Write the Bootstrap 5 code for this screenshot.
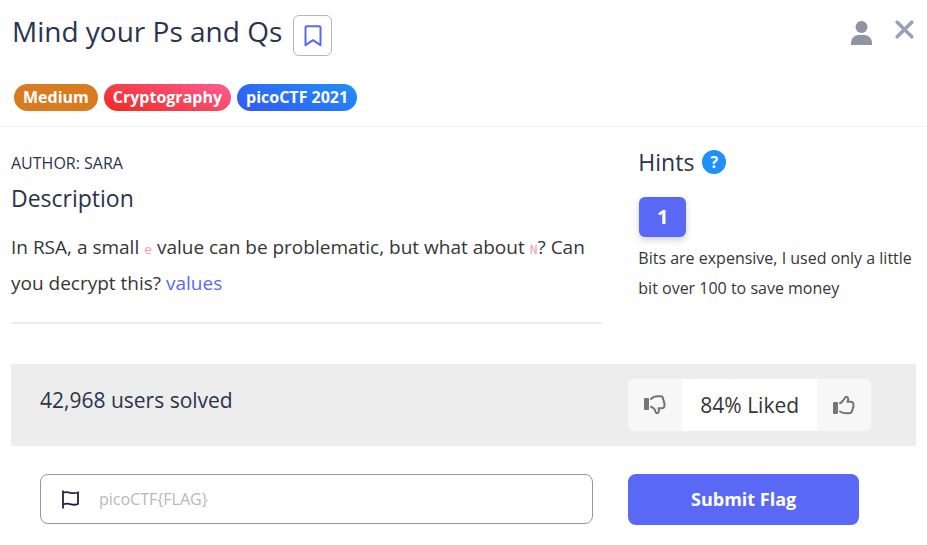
<!DOCTYPE html>
<html lang="en">
<head>
<meta charset="utf-8">
<meta name="viewport" content="width=device-width, initial-scale=1">
<title>Mind your Ps and Qs</title>
<link href="https://cdn.jsdelivr.net/npm/bootstrap@5.3.0/dist/css/bootstrap.min.css" rel="stylesheet">
<style>
  :root { --ink: #2b334c; --accent: #5a69f5; }
  body { font-family: "Open Sans", "Noto Sans", sans-serif; color: #363636; background: #fff; }
  h1, h2, .solved, .author { color: var(--ink); font-weight: 400; margin: 0; }
  svg { display: block; }
  .challenge-head { padding: 12px 12px 15px; border-bottom: 1px solid #f1f1f1; }
  h1 { font-size: 28px; line-height: 38px; }
  h2 { font-size: 23px; line-height: 30px; }
  .save-btn { width: 39px; height: 41px; margin: 3px 0 0 11px; border: 1px solid #b3b8c0; border-radius: 6px; background: #fff; }
  .head-actions { gap: 23px; padding: 8px 1px 0 0; }
  .head-actions button { border: 0; background: none; padding: 0; }
  .tags { gap: 6px; padding: 28px 0 0 2px; }
  .tag { height: 27px; line-height: 26px; padding: 0 9px; border-radius: 14px; color: #fff; font-size: 16px; font-weight: 700; text-decoration: none; }
  .tag-level { background: #d97b20; }
  .tag-topic { background: linear-gradient(20deg, #f02a1e, #ff5c93); }
  .tag-event { background: linear-gradient(20deg, #3457f5, #1e90fb); }
  .challenge-body { padding: 20px 11px 0; }
  .about { padding-right: 12px; }
  .author { font-size: 16px; line-height: 32px; }
  .about h2 { margin-top: 4px; }
  .statement { font-size: 19px; line-height: 36px; margin: 16px 0 21px; }
  .statement code { font-family: "DejaVu Sans Mono", monospace; font-size: 13px; line-height: 1; color: #f5a0b5; }
  .statement a { color: var(--accent); text-decoration: none; }
  .about hr { margin: 0; border-top: 2px solid #ededed; opacity: 1; }
  .help-btn { width: 24px; height: 24px; border: 0; border-radius: 50%; background: #1e8ffb; color: #fff; font-size: 16px; line-height: 24px; font-weight: 700; padding: 0; }
  .hint-btn { width: 47px; height: 40px; margin: 20px 0 6px 1px; border: 0; border-radius: 6px; background: var(--accent); color: #fff; font-size: 20px; font-weight: 700; box-shadow: 0 3px 7px rgba(40, 40, 70, .22); }
  .hint-text { font-size: 16px; line-height: 30px; margin: 0; }
  .stats { margin-top: 40px; background: #ededed; padding: 15px 0; }
  .solved { font-size: 21px; line-height: 42px; padding-left: 29px; }
  .rating { margin-left: 14px; height: 52px; border-radius: 6px; overflow: hidden; width: max-content; }
  .rating button { width: 54px; border: 0; background: #f7f7f7; color: #757575; }
  .rating output { background: #fff; font-size: 21px; line-height: 52px; padding: 0 18px; }
  .answer { padding: 28px 0 20px; }
  .flag-box { margin: 0 21px 0 29px; height: 50px; border: 1px solid #92969f; border-radius: 8px; padding: 0 21px; }
  .flag-box:focus-within { border-color: var(--accent); }
  .flag-box input { border: 0; outline: 0; background: none; font-size: 16px; padding: 0; margin-left: 20px; min-width: 0; }
  .flag-box input::placeholder { color: #b6b8c0; }
  .submit-btn { margin: 0 57px 0 14px; height: 51px; border: 0; border-radius: 8px; background: var(--accent); color: #fff; font-size: 18px; font-weight: 700; }
</style>
<script src="https://cdn.jsdelivr.net/npm/bootstrap@5.3.0/dist/js/bootstrap.bundle.min.js"></script>
</head>
<body>
<header class="challenge-head">
  <div class="d-flex align-items-start">
    <h1>Mind your Ps and Qs</h1>
    <button type="button" class="save-btn d-flex align-items-center justify-content-center p-0" aria-label="Bookmark">
      <svg width="18" height="22" viewBox="0 0 18 22" fill="none" stroke="#5a69f5" stroke-width="2" stroke-linejoin="round"><path d="M1.500 2.500Q1.500 1.200 2.800 1.200H15.200Q16.500 1.200 16.500 2.500V20.200L9 15.200L1.500 20.200Z"/></svg>
    </button>
    <div class="head-actions d-flex align-items-start ms-auto">
      <button type="button" aria-label="Profile">
        <svg width="21" height="25" viewBox="0 0 21 25" fill="#9093a1"><circle cx="10.500" cy="7" r="6"/><path d="M0 25V23C0 18 4 15 7.500 15H13.500C17 15 21 18 21 23V25Z"/></svg>
      </button>
      <button type="button" aria-label="Close">
        <svg width="19" height="19" viewBox="0 0 19 19" fill="none" stroke="#98a0ba" stroke-width="3.500" stroke-linecap="round"><path d="M2.200 2.200L16.800 16.800M16.800 2.200L2.200 16.800"/></svg>
      </button>
    </div>
  </div>
  <div class="tags d-flex flex-wrap">
    <a href="#" class="tag tag-level">Medium</a>
    <a href="#" class="tag tag-topic">Cryptography</a>
    <a href="#" class="tag tag-event">picoCTF 2021</a>
  </div>
</header>
<main class="challenge-body">
  <div class="row g-0">
    <section class="col-8 about">
      <p class="author">AUTHOR: SARA</p>
      <h2>Description</h2>
      <p class="statement">In RSA, a small <code>e</code> value can be problematic, but what about <code>N</code>? Can you decrypt this? <a href="#">values</a></p>
      <hr>
    </section>
    <aside class="col-4 ps-4">
      <div class="d-flex align-items-center gap-2">
        <h2>Hints</h2>
        <button type="button" class="help-btn" aria-label="About hints">?</button>
      </div>
      <button type="button" class="hint-btn">1</button>
      <p class="hint-text">Bits are expensive, I used only a little bit over 100 to save money</p>
    </aside>
  </div>
  <section class="stats row g-0">
    <div class="col-8"><p class="solved">42,968 users solved</p></div>
    <div class="col-4">
      <div class="rating d-flex">
        <button type="button" class="d-flex align-items-center justify-content-center p-0" aria-label="Dislike">
          <svg width="22" height="20" viewBox="0 0 22 20"><rect x="0" y="3" width="5" height="12" rx="1" fill="currentColor"/><path d="M7 4C9 1.800 11 1.200 14 1.300H16.500C18.600 1.300 19.100 2.600 19 4.200C20 5 20 6.200 19.700 7C20.700 8 20.800 9.400 20.300 10.200C20.700 12.300 19.500 13.200 17.800 13.200H14.500C15.300 15 15 18.300 12.900 18.300C11.200 18.300 11.600 15.600 10.400 14.200C9.400 13 8.800 12.300 7 11.700" fill="none" stroke="currentColor" stroke-width="2" stroke-linecap="round" stroke-linejoin="round"/></svg>
        </button>
        <output>84% Liked</output>
        <button type="button" class="d-flex align-items-center justify-content-center p-0" aria-label="Like">
          <svg width="22" height="20" viewBox="0 0 22 20"><rect x="0" y="7" width="5" height="12" rx="1" fill="currentColor"/><path d="M7 8.300C8.800 7.700 9.400 6 10.800 4.600C12 3 12 1.700 13.600 1.700C15.600 2 15.500 5 14.500 6.800H17.800C19.500 6.800 20.700 7.700 20.300 9.800C20.600 10.800 20.200 12.500 19.700 13C19.900 14.200 19.500 15.300 19 15.800C18.900 17.600 18 18.300 16 18.300H14C11 18.300 9 18 7 16.500" fill="none" stroke="currentColor" stroke-width="2" stroke-linecap="round" stroke-linejoin="round"/></svg>
        </button>
      </div>
    </div>
  </section>
  <form class="answer row g-0">
    <div class="col-8">
      <div class="flag-box d-flex align-items-center">
        <label for="flag" aria-label="Flag">
          <svg width="17" height="19" viewBox="0 0 17 19" fill="none" stroke="#1b2540" stroke-width="1.800"><path d="M1 .5V18.500M1 2.800C4 1.400 6 2 8.500 2.800C11 3.500 13 3.300 16 2.500V14C13 15.200 11 15 8.500 14.200C6 13.500 4 13.300 1 14.500"/></svg>
        </label>
        <input id="flag" type="text" class="flex-grow-1" placeholder="picoCTF{FLAG}">
      </div>
    </div>
    <div class="col-4 d-flex"><button type="submit" class="submit-btn flex-grow-1">Submit Flag</button></div>
  </form>
</main>
</body>
</html>
